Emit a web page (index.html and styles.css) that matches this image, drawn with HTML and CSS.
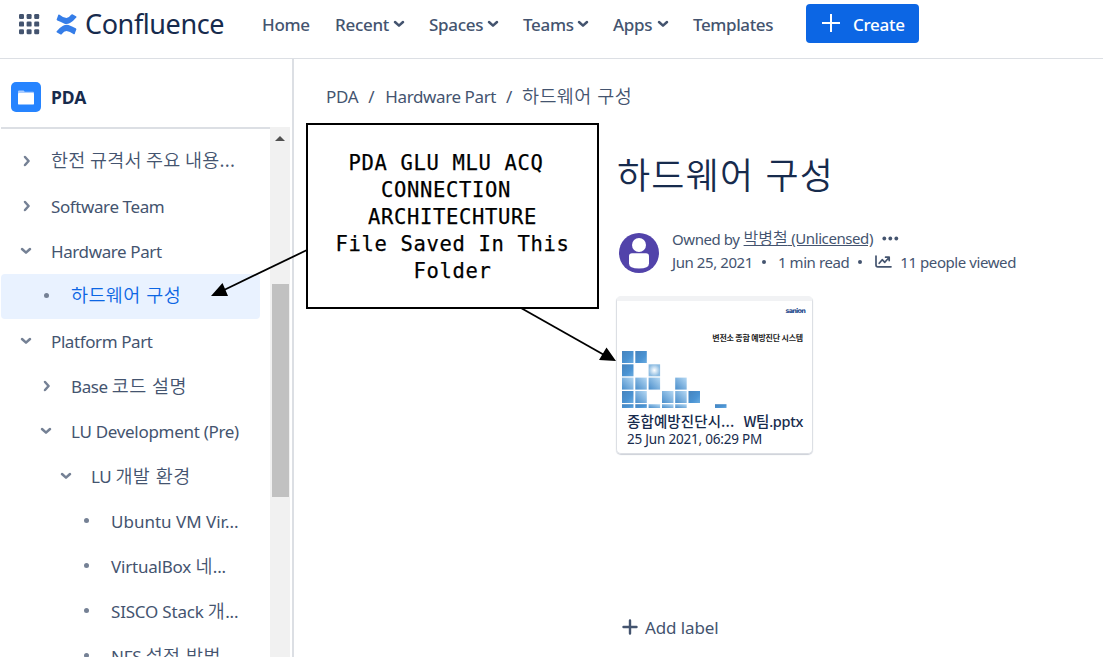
FILE: index.html
```
<!DOCTYPE html>
<html lang="en">
<head>
<meta charset="utf-8">
<title>하드웨어 구성 - PDA - Confluence</title>
<link rel="stylesheet" href="styles.css">
</head>
<body>
<svg class="defs" aria-hidden="true">
  <symbol id="down" viewBox="0 0 12 8"><path d="M2 2l4 3.6L10 2" fill="none" stroke="currentColor" stroke-width="2.5" stroke-linecap="round" stroke-linejoin="round"/></symbol>
  <symbol id="right" viewBox="0 0 8 12"><path d="M2 2l3.6 4L2 10" fill="none" stroke="currentColor" stroke-width="2.5" stroke-linecap="round" stroke-linejoin="round"/></symbol>
  <linearGradient id="t1" x1="0" y1="0" x2="1" y2="1"><stop offset="0" stop-color="#4583bd"/><stop offset=".6" stop-color="#4a93d3"/><stop offset="1" stop-color="#6aabdf"/></linearGradient>
  <linearGradient id="t2" x1="0" y1="1" x2="1" y2="0"><stop offset="0" stop-color="#4a8ecb"/><stop offset="1" stop-color="#b5d8f3"/></linearGradient>
  <radialGradient id="t3"><stop offset="0" stop-color="#ffffff"/><stop offset="1" stop-color="#8dbce2"/></radialGradient>
</svg>
<header class="topbar">
  <svg class="switcher" viewBox="0 0 20 20" fill="#44546f"><g id="sw"><rect width="5" height="5" rx="1.2"/><rect x="7.6" width="5" height="5" rx="1.2"/><rect x="15.2" width="5" height="5" rx="1.2"/></g><use href="#sw" y="7.6"/><use href="#sw" y="15.2"/></svg>
  <div class="brand">
    <svg class="mark" viewBox="0 0 21 21" fill="#357de8"><path id="wave" d="M2.300 .8Q1.600 3 .6 5.600 .7 6.300 1.300 6.600 5 8.200 8.500 9.700 11.200 10.400 14 9 17 7.500 20.500 3.300 20.700 2.600 20 2.200L16.400 .3Q15.600 .1 15.100 .8 13 3.900 10.500 3.900 7 3.700 3.600 .7 2.900 .3 2.300 .8Z"/><use href="#wave" transform="rotate(180 10.5 10.4)"/></svg>
    <span class="brand-name">Confluence</span>
  </div>
  <nav class="nav">
    <span class="item">Home</span>
    <span class="item">Recent<svg class="chev"><use href="#down"/></svg></span>
    <span class="item">Spaces<svg class="chev"><use href="#down"/></svg></span>
    <span class="item">Teams<svg class="chev"><use href="#down"/></svg></span>
    <span class="item">Apps<svg class="chev"><use href="#down"/></svg></span>
    <span class="item">Templates</span>
  </nav>
  <button class="create"><svg viewBox="0 0 18 18" width="18" height="18"><path d="M9 .5v17M.5 9h17" stroke="#fff" stroke-width="2" fill="none" stroke-linecap="round"/></svg><span>Create</span></button>
</header>
<div class="body">
  <aside class="sidebar">
    <div class="space">
      <span class="space-icon"><svg viewBox="0 0 16 15" width="16" height="15"><path d="M0 1.4Q0 .4 1 .4h4.600l1.200 1.300H15q1 0 1 1V6H0Z" fill="#a9ccff"/><rect y="3" width="16" height="11.6" rx="1.2" fill="#fff"/></svg></span>
      <span class="space-name">PDA</span>
    </div>
    <div class="tree-area">
      <ul class="tree">
        <li><svg class="r"><use href="#right"/></svg><span class="ko long">한전 규격서 주요 내용...</span></li>
        <li><svg class="r"><use href="#right"/></svg><span>Software Team</span></li>
        <li><svg class="d"><use href="#down"/></svg><span>Hardware Part</span></li>
        <li class="l1 selected"><i class="dot"></i><span class="ko">하드웨어 구성</span></li>
        <li><svg class="d"><use href="#down"/></svg><span>Platform Part</span></li>
        <li class="l1"><svg class="r"><use href="#right"/></svg><span>Base <b class="ko">코드 설명</b></span></li>
        <li class="l1"><svg class="d"><use href="#down"/></svg><span class="lu">LU Development (Pre)</span></li>
        <li class="l2"><svg class="d"><use href="#down"/></svg><span>LU <b class="ko">개발 환경</b></span></li>
        <li class="l3"><i class="dot"></i><span class="wide">Ubuntu VM Vir...</span></li>
        <li class="l3"><i class="dot"></i><span>VirtualBox <b class="ko">네</b>...</span></li>
        <li class="l3"><i class="dot"></i><span>SISCO Stack <b class="ko">개</b>...</span></li>
        <li class="l3"><i class="dot"></i><span>NFS <b class="ko">설정 방법</b></span></li>
      </ul>
      <div class="scrollbar"><span class="up"></span><span class="thumb"></span></div>
    </div>
  </aside>
  <main class="main">
    <div class="crumbs"><span>PDA</span><span>/</span><span class="hw">Hardware Part</span><span>/</span><span class="ko">하드웨어 구성</span></div>
    <article class="page">
      <h1>하드웨어 구성</h1>
      <div class="byline">
        <svg class="avatar" viewBox="0 0 40 40"><circle cx="20" cy="20" r="20" fill="#5243aa"/><circle cx="20" cy="12" r="7" fill="#fff"/><path d="M10 23.200q0-3 3-3h14q3 0 3 3v7.300q0 5-10 5t-10-5z" fill="#fff"/></svg>
        <div class="meta">
          <div class="owner"><span>Owned by</span><a><b class="ko">박병철</b> (Unlicensed)</a><svg width="17" height="5" viewBox="0 0 17 5" fill="#44546f"><circle cx="2.300" cy="2.500" r="1.900"/><circle cx="8.300" cy="2.500" r="1.900"/><circle cx="14.300" cy="2.500" r="1.900"/></svg></div>
          <div class="stats"><span>Jun 25, 2021</span><i class="sep"></i><span>1 min read</span><i class="sep"></i><svg width="17" height="13" viewBox="0 0 17 13" fill="none" stroke="#44546f" stroke-width="1.700" stroke-linecap="round" stroke-linejoin="round"><path d="M1 1v9q0 1.800 1.800 1.800H16M4.200 8.300l3-3.600 2.600 2.600 4-4.500M10.600 2.200h3.600v3.400"/></svg><span class="viewed">11 people viewed</span></div>
        </div>
      </div>
      <div class="card">
        <div class="slide">
          <div class="logo">sanion</div>
          <div class="slide-title">변전소 종합 예방진단 시스템</div>
          <svg class="tiles" viewBox="0 0 110 57" width="110" height="57">
            <g fill="url(#t1)"><rect width="11.500" height="12"/><rect x="13.300" width="11.500" height="12"/><rect y="13.300" width="11.500" height="12"/><rect y="40" width="11.500" height="12"/><rect x="66.500" y="40" width="11.500" height="12"/><rect y="53.200" width="11.500" height="3.800"/><rect x="13.300" y="53.200" width="11.500" height="3.800"/><rect x="93" y="53.200" width="11.500" height="3.800"/></g>
            <g fill="url(#t2)"><rect y="26.600" width="11.500" height="12"/><rect x="13.300" y="26.600" width="11.500" height="12"/><rect x="26.600" y="26.600" width="11.500" height="12"/><rect x="53.200" y="26.600" width="11.500" height="12"/><rect x="13.300" y="40" width="11.500" height="12"/><rect x="40" y="40" width="11.500" height="12"/><rect x="53.200" y="40" width="11.500" height="12"/><rect x="26.600" y="53.200" width="11.500" height="3.800"/><rect x="40" y="53.200" width="11.500" height="3.800"/><rect x="53.200" y="53.200" width="11.500" height="3.800"/></g>
            <rect x="26.600" y="13.300" width="11.500" height="12" fill="url(#t3)"/>
          </svg>
        </div>
        <div class="file"><span class="fn">종합예방진단시...</span><span class="ext">W팀<em>.pptx</em></span></div>
        <div class="date">25 Jun 2021, 06:29 PM</div>
      </div>
      <div class="add-label"><svg width="16" height="16" viewBox="0 0 16 16"><path d="M8 1.500v13M1.500 8h13" stroke="#44546f" stroke-width="2.400" stroke-linecap="round"/></svg><span>Add label</span></div>
    </article>
  </main>
</div>
<div class="note"><span>PDA GLU MLU ACQ&nbsp;</span><span>CONNECTION&nbsp;</span><span>ARCHITECHTURE</span><span>File Saved In This</span><span>Folder</span></div>
<svg class="arrows" viewBox="0 0 1103 657"><g stroke="#000" stroke-width="1.800"><path d="M307 250L222 291"/><path d="M521 308L606 356"/></g><path d="M211 296l11.500-13 5.500 13zM616 361l-9.500-13.500-7.500 12.500z"/></svg>
</body>
</html>
```
FILE: styles.css
```
* { box-sizing: border-box; }
body { margin: 0; width: 1103px; height: 657px; overflow: hidden; position: relative; background: #fff; color: #44546f; font-family: "Noto Sans", "Noto Sans CJK KR", sans-serif; font-size: 17px; letter-spacing: -0.3px; white-space: nowrap; display: flex; flex-direction: column; }
.defs { position: absolute; width: 0; height: 0; }
svg { flex: none; }
b, i, em { font-weight: inherit; font-style: normal; }
.ko { font-family: "Noto Sans CJK KR", sans-serif; font-weight: 350; font-size: 18.5px; letter-spacing: 0.4px; word-spacing: 1px; line-height: 20px; }

.topbar { height: 59px; flex: none; border-bottom: 1px solid #dcdfe4; display: flex; align-items: flex-start; padding-left: 19px; }
.switcher { width: 20px; height: 20px; margin-top: 14px; overflow: visible; }
.brand { display: flex; margin-left: 17px; width: 206px; }
.mark { width: 21px; height: 21px; margin-top: 14px; }
.brand-name { font-size: 27px; line-height: 47px; margin-left: 8px; color: #172b4d; letter-spacing: -0.4px; }
.nav { display: grid; grid-template-columns: 73px 94px 94px 90px 80px 113px; font-weight: 500; line-height: 50px; }
.item { display: flex; align-items: center; height: 49px; }
.nav .item:nth-child(2), .nav .item:nth-child(3) { width: 70px; }
.nav .item:nth-child(4) { width: 66px; }
.nav .item:nth-child(5) { width: 56px; }
.nav .item:nth-child(6) { letter-spacing: -0.4px; }
.chev { width: 12px; height: 8px; margin: -2px 0 0 auto; }
.create { margin: 4px 0 0; width: 113px; height: 39px; border: 0; border-radius: 4px; background: #0c66e4; color: #fff; font: 500 17px "Noto Sans", sans-serif; letter-spacing: -0.3px; display: flex; align-items: center; padding: 1px 0 0 16px; gap: 13px; }
.create svg { margin-top: -3px; }

.body { flex: 1; min-height: 0; display: flex; }
.sidebar { width: 294px; flex: none; border-right: 2px solid #dcdfe4; display: flex; flex-direction: column; }
.space { height: 68px; flex: none; display: flex; align-items: center; padding: 8px 0 0 11px; gap: 10px; }
.space-icon { width: 30px; height: 30px; border-radius: 5px; background: #2684ff; display: grid; place-items: center; }
.space-name { font-weight: 700; font-size: 17.500px; letter-spacing: -0.1px; color: #172b4d; }
.tree-area { flex: 1; min-height: 0; display: flex; }
.tree { list-style: none; margin: 0 0 0 1px; padding: 10px 10px 0 0; width: 269px; border-top: 2px solid #dcdfe4; overflow: hidden; }
.tree li { height: 45px; display: flex; align-items: center; padding-left: 50px; border-radius: 4px; letter-spacing: -0.4px; }
.tree li span { line-height: 45px; }
.tree li > .ko { line-height: 41px; padding-bottom: 4px; }
.tree li > .long { letter-spacing: 0.25px; word-spacing: 0; }
.tree .wide { letter-spacing: 0; }
.tree .lu { letter-spacing: -0.3px; }
.tree .l1 { padding-left: 70px; }
.tree .l2 { padding-left: 90px; }
.tree .l3 { padding-left: 110px; letter-spacing: -0.2px; }
.tree svg { color: #758195; }
.r { width: 8px; height: 12px; margin: -1px 20px 0 -28px; }
.d { width: 12px; height: 8px; margin: -1px 19px 0 -31px; }
.dot { width: 5px; height: 5px; border-radius: 50%; background: #758195; margin: -2px 22px 0 -27px; }
.selected { background: #e9f2ff; color: #0c66e4; }
.scrollbar { width: 20px; background: #f1f1f1; padding: 9px 0 0 2px; }
.up { display: block; width: 10px; height: 5px; margin: 0 0 143px 3px; background: #505050; clip-path: polygon(50% 0, 100% 100%, 0 100%); }
.thumb { display: block; width: 17px; height: 213px; background: #c1c1c1; }

.main { flex: 1; padding: 25px 0 0 32px; }
.crumbs { display: flex; align-items: center; gap: 10px; height: 24px; }
.crumbs .ko { padding-bottom: 2px; }
.crumbs .hw { letter-spacing: -0.4px; margin-left: 1px; }
.page { padding-left: 291px; }
h1 { margin: 39px 0 0; font: 350 36px/52px "Noto Sans CJK KR", sans-serif; color: #172b4d; height: 52px; letter-spacing: 1.2px; word-spacing: 2px; }
.byline { display: flex; margin-top: 28px; gap: 13px; padding-left: 2px; }
.avatar { width: 40px; height: 40px; margin-top: 6px; }
.meta { font-size: 15px; letter-spacing: -0.42px; }
.owner, .stats { display: flex; align-items: center; height: 23px; }
.owner a { text-decoration: underline; margin: 0 9px 0 4px; line-height: 23px; }
.meta .ko { font-size: 16px; letter-spacing: 0; }
.sep { width: 4px; height: 4px; border-radius: 50%; background: #44546f; margin: 0 12px 0 9px; }
.stats svg { margin-left: 1px; }
.viewed { margin-left: 8px; }
.card { width: 197px; height: 158px; margin: 23px 0 0 -1px; border: 1px solid #dcdfe4; border-radius: 5px; border-top: 5px solid #f1f2f4; box-shadow: 0 1px 1px #ccd0d8; color: #172b4d; }
.slide { height: 110px; display: flex; flex-direction: column; }
.logo { align-self: flex-end; margin: 4px 7px 0 0; font: 700 6.500px/12px "DejaVu Sans", sans-serif; color: #1b4589; letter-spacing: -.8px; }
.slide-title { align-self: flex-end; margin: 15px 9px 0 0; font: 700 8px/12px "Noto Sans CJK KR", sans-serif; letter-spacing: -0.2px; color: #222; }
.tiles { margin: 7px 0 0 5px; }
.file { display: flex; justify-content: space-between; padding: 0 9px 0 10px; font: 500 14.500px/20px "Noto Sans CJK KR", sans-serif; letter-spacing: 0.1px; }
.file .ext { letter-spacing: -0.3px; }
.file em { font-family: "Noto Sans", sans-serif; }
.date { font-size: 13.500px; line-height: 16px; padding-left: 10px; letter-spacing: -0.2px; }
.add-label { display: flex; align-items: center; gap: 7px; margin: 161px 0 0 5px; height: 24px; letter-spacing: -0.1px; }

.note { position: absolute; left: 306px; top: 123px; width: 293px; height: 186px; border: 2px solid #000; background: #fff; color: #000; display: flex; flex-direction: column; align-items: center; padding-top: 25px; font: 20.500px/27px "DejaVu Sans Mono", monospace; letter-spacing: .65px; -webkit-text-stroke: .25px #000; }
.arrows { position: absolute; left: 0; top: 0; width: 1103px; height: 657px; }
```
